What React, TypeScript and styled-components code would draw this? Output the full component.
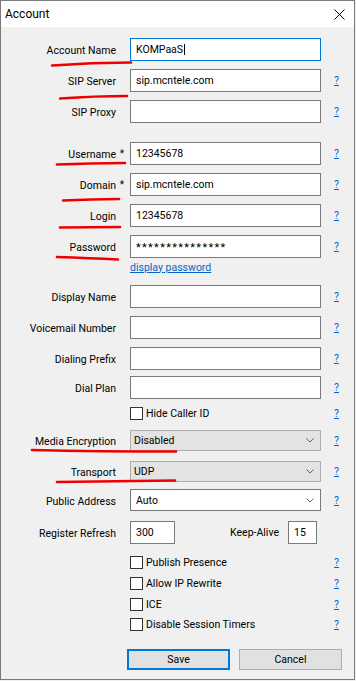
import styled, { createGlobalStyle } from "styled-components";

const GlobalStyle = createGlobalStyle`
  html, body {
    margin: 0;
    padding: 0;
    background: #f0f0f0;
  }
  body {
    font-family: "Segoe UI", Roboto, "Noto Sans", sans-serif;
    font-size: 10.5px;
    color: #000;
  }
`;

const Window = styled.div`
  position: relative;
  width: 355px;
  height: 680px;
  box-sizing: border-box;
  border: 1px solid #7a7a7a;
  background: #f0f0f0;
  display: flex;
  flex-direction: column;
`;

const TitleBar = styled.div`
  height: 26px;
  flex: none;
  background: #fff;
  display: flex;
  align-items: center;
  justify-content: space-between;
  padding: 0 9px 0 4px;
  font-size: 12px;
`;

const Row = styled.div<{ $mt: number; $h: number }>`
  display: flex;
  align-items: center;
  flex: none;
  height: ${(p) => p.$h}px;
  margin-top: ${(p) => p.$mt}px;
`;

const Label = styled.div`
  width: 115px;
  flex: none;
  margin-right: 14px;
  text-align: right;
  white-space: nowrap;
  position: relative;
  top: 1px;
`;

const Required = styled.span`
  display: inline-block;
  width: 8px;
  margin-right: -8px;
  text-align: right;
  font-size: 10px;
  position: relative;
  top: -1px;
`;

const Field = styled.div<{ $w?: number; $focused?: boolean }>`
  box-sizing: border-box;
  width: ${(p) => p.$w ?? 191}px;
  height: 100%;
  flex: none;
  display: flex;
  align-items: center;
  padding-left: 5px;
  background: #fff;
  border: 1px solid ${(p) => (p.$focused ? "#0078d7" : "#7a7a7a")};
  white-space: nowrap;
`;

const Caret = styled.span`
  display: inline-block;
  width: 1px;
  height: 11px;
  margin-left: 1px;
  background: #000;
`;

const Masked = styled.span`
  font-size: 11px;
  letter-spacing: 1.3px;
  position: relative;
  top: 1px;
`;

const Combo = styled.div<{ $disabled?: boolean }>`
  box-sizing: border-box;
  width: 191px;
  height: 100%;
  flex: none;
  display: flex;
  align-items: center;
  justify-content: space-between;
  padding: 0 6px 0 ${(p) => (p.$disabled ? 3 : 5)}px;
  background: ${(p) => (p.$disabled ? "#e3e3e3" : "#fff")};
  border: 1px solid ${(p) => (p.$disabled ? "#adadad" : "#7a7a7a")};
`;

const Help = styled.a`
  margin-left: 13px;
  color: #0066cc;
  text-decoration: underline;
  cursor: pointer;
`;

const LinkRow = styled.a`
  margin-left: 129px;
  color: #0066cc;
  text-decoration: underline;
  cursor: pointer;
`;

const CheckCell = styled.label`
  width: 191px;
  flex: none;
  display: flex;
  align-items: center;
  gap: 3px;
  white-space: nowrap;
`;

const Box = styled.span`
  box-sizing: border-box;
  width: 13px;
  height: 13px;
  border: 1px solid #333;
  background: #fff;
`;

const Spacer = styled.div`
  width: 129px;
  flex: none;
`;

const KeepLabel = styled.div`
  width: 104px;
  flex: none;
  margin-right: 9px;
  text-align: right;
`;

const Buttons = styled.div`
  display: flex;
  gap: 9px;
  margin: 18px 0 0 126px;
  height: 21px;
`;

const Button = styled.button<{ $primary?: boolean }>`
  box-sizing: border-box;
  width: 103px;
  height: 21px;
  padding: 0;
  font: inherit;
  color: #000;
  background: #e1e1e1;
  border: ${(p) => (p.$primary ? "2px solid #0078d7" : "1px solid #adadad")};
`;

const Marks = styled.svg`
  position: absolute;
  top: -1px;
  left: -1px;
  width: 355px;
  height: 680px;
  pointer-events: none;
`;

const Chevron = () => (
  <svg width="8" height="5" viewBox="0 0 8 5">
    <polyline points="0.5,0.5 4,4 7.5,0.5" fill="none" stroke="#606060" strokeWidth="1" />
  </svg>
);

const CloseIcon = () => (
  <svg width="11" height="11" viewBox="0 0 11 11">
    <path d="M0.5 0.5 L10.5 10.5 M10.5 0.5 L0.5 10.5" stroke="#000" strokeWidth="1" />
  </svg>
);

const textRows = [
  { label: "Display Name", mt: 10 },
  { label: "Voicemail Number", mt: 8 },
  { label: "Dialing Prefix", mt: 8 },
  { label: "Dial Plan", mt: 6 },
];

const lowerChecks = [
  { label: "Publish Presence", mt: 12 },
  { label: "Allow IP Rewrite", mt: 8 },
  { label: "ICE", mt: 8 },
  { label: "Disable Session Timers", mt: 7 },
];

// red hand-drawn underlines from the annotated screenshot
const strokes = [
  "M52 65.5 Q92 62.5 131 62.5",
  "M60 98.5 Q95 96 127 96",
  "M57 164.5 Q90 163 125 163",
  "M63 200.5 Q92 199 119 199",
  "M60 227.5 Q90 227 120 227",
  "M57 257 Q90 258 118 259.5",
  "M32 450 Q100 451.5 176 451.5",
  "M57 482 Q115 481 175 480.5",
];

export default function App() {
  return (
    <>
      <GlobalStyle />
      <Window>
        <TitleBar>
          <span>Account</span>
          <CloseIcon />
        </TitleBar>

        <Row $mt={11} $h={23}>
          <Label>Account Name</Label>
          <Field $focused>
            KOMPaaS
            <Caret />
          </Field>
        </Row>
        <Row $mt={8} $h={23}>
          <Label>SIP Server</Label>
          <Field>sip.mcntele.com</Field>
          <Help>?</Help>
        </Row>
        <Row $mt={8} $h={23}>
          <Label>SIP Proxy</Label>
          <Field />
          <Help>?</Help>
        </Row>

        <Row $mt={19} $h={23}>
          <Label>
            Username<Required>*</Required>
          </Label>
          <Field>12345678</Field>
          <Help>?</Help>
        </Row>
        <Row $mt={8} $h={23}>
          <Label>
            Domain<Required>*</Required>
          </Label>
          <Field>sip.mcntele.com</Field>
          <Help>?</Help>
        </Row>
        <Row $mt={8} $h={23}>
          <Label>Login</Label>
          <Field>12345678</Field>
          <Help>?</Help>
        </Row>
        <Row $mt={8} $h={23}>
          <Label>Password</Label>
          <Field>
            <Masked>***************</Masked>
          </Field>
          <Help>?</Help>
        </Row>
        <Row $mt={1} $h={16}>
          <LinkRow>display password</LinkRow>
        </Row>

        {textRows.map((r) => (
          <Row key={r.label} $mt={r.mt} $h={23}>
            <Label>{r.label}</Label>
            <Field />
            <Help>?</Help>
          </Row>
        ))}

        <Row $mt={8} $h={13}>
          <Spacer />
          <CheckCell>
            <Box />
            Hide Caller ID
          </CheckCell>
          <Help>?</Help>
        </Row>

        <Row $mt={10} $h={21}>
          <Label>Media Encryption</Label>
          <Combo $disabled>
            Disabled
            <Chevron />
          </Combo>
          <Help>?</Help>
        </Row>
        <Row $mt={10} $h={21}>
          <Label>Transport</Label>
          <Combo $disabled>
            UDP
            <Chevron />
          </Combo>
          <Help>?</Help>
        </Row>
        <Row $mt={7} $h={22}>
          <Label>Public Address</Label>
          <Combo>
            Auto
            <Chevron />
          </Combo>
          <Help>?</Help>
        </Row>

        <Row $mt={10} $h={23}>
          <Label>Register Refresh</Label>
          <Field $w={45}>300</Field>
          <KeepLabel>Keep-Alive</KeepLabel>
          <Field $w={29}>15</Field>
        </Row>

        {lowerChecks.map((c) => (
          <Row key={c.label} $mt={c.mt} $h={13}>
            <Spacer />
            <CheckCell>
              <Box />
              {c.label}
            </CheckCell>
            <Help>?</Help>
          </Row>
        ))}

        <Buttons>
          <Button $primary>Save</Button>
          <Button>Cancel</Button>
        </Buttons>

        <Marks viewBox="0 0 355 680">
          {strokes.map((d) => (
            <path
              key={d}
              d={d}
              fill="none"
              stroke="#ee0000"
              strokeWidth="2.6"
              strokeLinecap="round"
            />
          ))}
        </Marks>
      </Window>
    </>
  );
}
